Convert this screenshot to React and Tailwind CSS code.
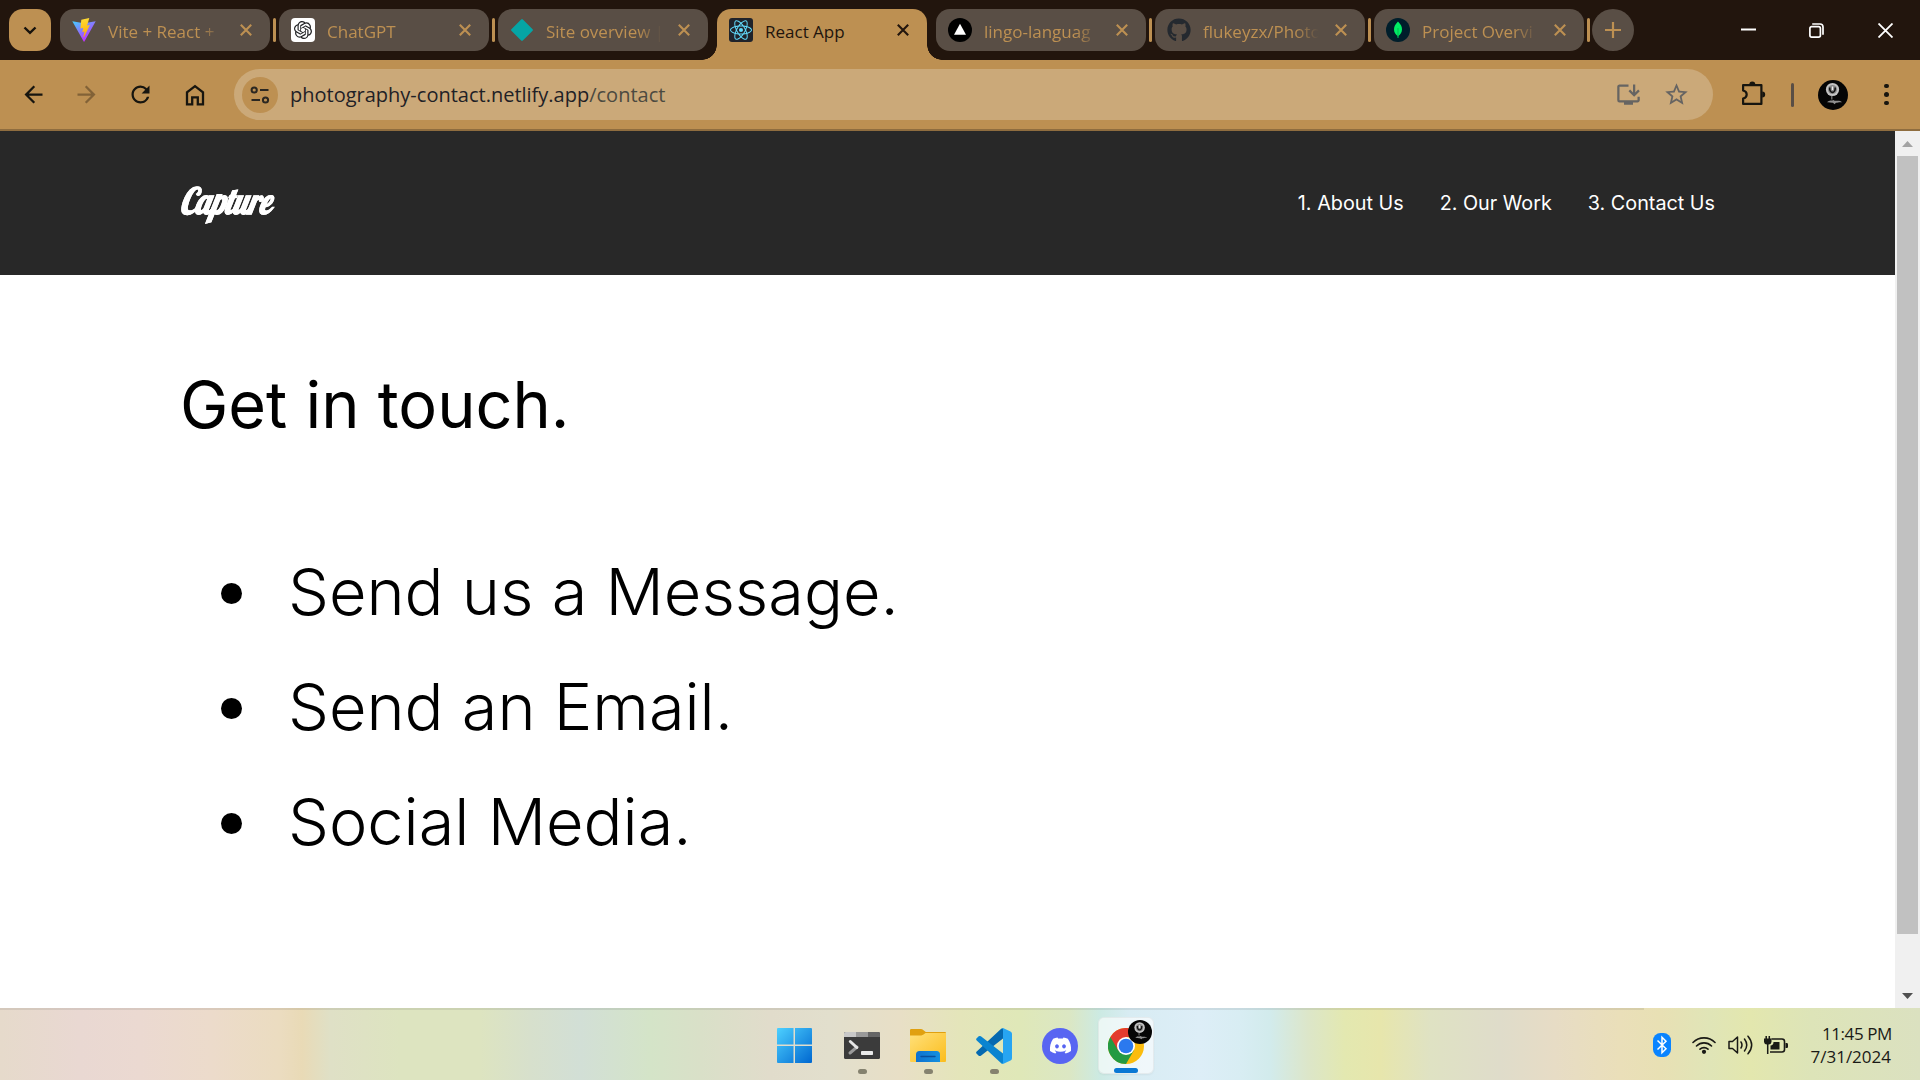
import { MdArrowBack, MdArrowForward, MdRefresh, MdInstallDesktop, MdStarOutline } from "react-icons/md";
import { FaGithub, FaDiscord } from "react-icons/fa";
import { SiOpenai, SiReact } from "react-icons/si";

function ViteIcon() {
  return (
    <svg viewBox="0 0 24 24" className="size-6">
      <defs>
        <linearGradient id="viteBody" x1="0" y1="0" x2="0.6" y2="0.9">
          <stop offset="0" stopColor="#41d1ff" />
          <stop offset="1" stopColor="#bd34fe" />
        </linearGradient>
        <linearGradient id="viteBolt" x1="0.4" y1="0" x2="0.5" y2="1">
          <stop offset="0" stopColor="#ffdd35" />
          <stop offset="1" stopColor="#ffa800" />
        </linearGradient>
      </defs>
      <path d="M.3 3.2 12 5.2l11.7-2L12.4 23.5a.4.4 0 0 1-.7 0Z" fill="url(#viteBody)" />
      <path d="m17.3.1-8 1.6-.9 8.9 2.8-.6-.9 4.1 2.3-.7-1.2 5.3c0 .4.3.6.6.2L17.900 7l-2.900.6 1-3.200Z" fill="url(#viteBolt)" />
    </svg>
  );
}

function ChatGptIcon() {
  return (
    <span className="flex size-6 items-center justify-center rounded-[4px] bg-white">
      <SiOpenai className="size-[18px] text-[#202123]" />
    </span>
  );
}

function NetlifyIcon() {
  return (
    <svg viewBox="0 0 24 24" className="size-6">
      <rect x="3.9" y="3.9" width="16.200" height="16.200" rx="1.200" transform="rotate(45 12 12)" fill="#05a5a5" />
    </svg>
  );
}

function ReactIcon() {
  return (
    <span className="flex size-6 items-center justify-center rounded-[3px] bg-[#20232a]">
      <SiReact className="size-[22px] text-[#61dafb]" />
    </span>
  );
}

function VercelIcon() {
  return (
    <svg viewBox="0 0 24 24" className="size-6">
      <circle cx="12" cy="12" r="12" fill="#000" />
      <path d="m12 5.800 6 11H6Z" fill="#fff" />
    </svg>
  );
}

function MongoIcon() {
  return (
    <svg viewBox="0 0 24 24" className="size-6">
      <circle cx="12" cy="12" r="12" fill="#001e2b" />
      <path d="M12 3.500c3 3 4 5.300 4 8 0 3-1.600 5-3.600 6.500V20h-.8v-2C9.600 16.500 8 14.500 8 11.500c0-2.700 1-5 4-8Z" fill="#00ed64" />
      <path d="M12 10v9" stroke="#00a34a" strokeWidth=".7" />
    </svg>
  );
}

function Cross({ className }) {
  return (
    <svg viewBox="0 0 12 12" className={className} fill="none" stroke="currentColor" strokeWidth="2.100">
      <path d="m.8.8 10.400 10.400M11.200.8.8 11.200" />
    </svg>
  );
}

const tabs = [
  { title: "Vite + React +", icon: <ViteIcon />, divider: true },
  { title: "ChatGPT", icon: <ChatGptIcon />, divider: true },
  { title: "Site overview |", icon: <NetlifyIcon /> },
  { title: "React App", icon: <ReactIcon />, active: true },
  { title: "lingo-languag", icon: <VercelIcon />, divider: true },
  { title: "flukeyzx/Photo", icon: <FaGithub className="size-6 text-[#24292f]" />, divider: true },
  { title: "Project Overvi", icon: <MongoIcon />, divider: true },
];

function Tab({ tab }) {
  if (tab.active) {
    return (
      <div className="relative flex h-[51px] w-[210px] shrink-0 items-start rounded-t-[14px] bg-[#bd9052] pl-3 text-[#22150d]">
        <span className="absolute bottom-0 -left-[15px] size-[15px] bg-[radial-gradient(circle_at_0_0,transparent_14.500px,#bd9052_15px)]" />
        <span className="absolute -right-[15px] bottom-0 size-[15px] bg-[radial-gradient(circle_at_100%_0,transparent_14.500px,#bd9052_15px)]" />
        <div className="flex h-[42px] items-center">
          {tab.icon}
          <span className="ml-3 w-[116px] pt-[3px] whitespace-nowrap">{tab.title}</span>
          <Cross className="ml-4 size-3" />
        </div>
      </div>
    );
  }
  return (
    <div className="flex h-[42px] w-[210px] shrink-0 items-center rounded-[14px] bg-[#594e45] pl-3 text-[#bd9052]">
      {tab.icon}
      <span className="ml-3 w-[122px] mask-r-from-75% mask-r-to-95% pt-[3px] whitespace-nowrap">{tab.title}</span>
      <Cross className="ml-2.5 size-3" />
    </div>
  );
}

function TabStrip() {
  return (
    <div className="flex h-[60px] items-start bg-[#22150d] pt-[9px] pl-[9px] text-[17px]">
      <button className="mr-[9px] flex size-[42px] items-center justify-center rounded-[14px] bg-[#bd9052]">
        <svg viewBox="0 0 14 9" className="h-[9px] w-3.5" fill="none" stroke="#17120c" strokeWidth="2.400">
          <path d="m1.500 1.500 5.500 5.300 5.500-5.300" />
        </svg>
      </button>
      {tabs.map((tab) => (
        <div key={tab.title} className="flex shrink-0 last-of-type:-mr-px">
          <Tab tab={tab} />
          <div className="flex h-[42px] w-[9px] items-center justify-center">
            {tab.divider && <span className="h-6 w-[3px] rounded-sm bg-[#bd9052]" />}
          </div>
        </div>
      ))}
      <button className="-ml-px flex size-[42px] items-center justify-center rounded-full bg-[#594e45]">
        <svg viewBox="0 0 16 16" className="size-4" stroke="#bd9052" strokeWidth="2.200">
          <path d="M8 0v16M0 8h16" />
        </svg>
      </button>
      <div className="ml-auto flex h-[42px] items-center pr-[27px] text-white">
        <svg viewBox="0 0 15 15" className="mr-[53px] size-[15px]" stroke="currentColor" strokeWidth="2">
          <path d="M0 6.500h15" />
        </svg>
        <svg viewBox="0 0 15 15" className="mr-[54px] size-[15px]" fill="none" stroke="currentColor" strokeWidth="1.700">
          <rect x=".9" y="3.600" width="10.500" height="10.500" rx="1.800" />
          <path d="M3.200 1h7.800a3 3 0 0 1 3 3v7.800" />
        </svg>
        <svg viewBox="0 0 15 15" className="size-[15px]" stroke="currentColor" strokeWidth="1.800">
          <path d="m.5.5 14 14m0-14-14 14" />
        </svg>
      </div>
    </div>
  );
}

function Avatar({ className }) {
  return (
    <svg viewBox="0 0 30 30" className={className}>
      <circle cx="15" cy="15" r="15" fill="#050505" />
      <circle cx="14.500" cy="9.500" r="6.600" fill="#c4c4c4" />
      <circle cx="14.500" cy="9.500" r="4.600" fill="#8a8a8a" />
      <path d="M11.700 7.500c-.5 6.500 6 6.500 5.500 0" fill="none" stroke="#111" strokeWidth="1.600" />
      <path d="M14.500 6.500v3.500" stroke="#eee" strokeWidth="1.200" />
      <path d="M13.800 16v3.500" stroke="#777" strokeWidth="1.300" />
      <path d="M9 22.300c2.500-2.800 5-1 6.500-2.300 2 2 6-.5 8.500 2.300-3-.5-4 .5-6 .5l-1.500 1.400-1.500-1.400c-2 .3-4-.8-6-.5Z" fill="#8f8f8f" />
    </svg>
  );
}

function Toolbar() {
  return (
    <div className="flex h-[71px] items-center border-b-2 border-[#8f6d3f] bg-[#bd9052] text-[#17150f]">
      <MdArrowBack className="ml-[20px] size-[27px]" />
      <MdArrowForward className="ml-[26px] size-[27px] text-[#826237]" />
      <MdRefresh className="ml-[27px] size-[27px]" />
      <svg viewBox="0 0 20 22" className="ml-[31px] h-[22px] w-5" fill="none" stroke="currentColor" strokeWidth="2.300">
        <path d="M2 20.300V8.400l8-6.200 8 6.200v11.900h-5.200v-7H7.200v7Z" />
      </svg>
      <div className="ml-[29px] flex h-[51px] w-[1479px] items-center rounded-full bg-[#cba979] pl-2">
        <span className="flex size-9 items-center justify-center rounded-full bg-[#bd9052]">
          <svg viewBox="0 0 20 18" className="h-[18px] w-5" fill="none" stroke="#2b2721" strokeWidth="2">
            <circle cx="4.200" cy="4" r="2.600" />
            <path d="M10 4h8.500M1.500 14H10" />
            <circle cx="15.500" cy="14" r="2.600" />
          </svg>
        </span>
        <span className="ml-3 text-[20px] text-[#1f2126]">
          photography-contact.netlify.app<span className="text-[#4c4a40]">/contact</span>
        </span>
        <MdInstallDesktop className="ml-auto size-[27px] text-[#666462]" />
        <MdStarOutline className="mr-[23px] ml-[21px] size-[27px] text-[#666462]" />
      </div>
      <svg viewBox="0 0 26 26" className="ml-[28px] size-[26px] -translate-y-0.5" fill="none" stroke="currentColor" strokeWidth="2.200" strokeLinejoin="round">
        <path d="M2.100 5.100h18.300v18.800H2.100v-5.400c4.800-1 4.800-7 0-8Z" />
        <path d="M8.300 4.400a3 3 0 0 1 6 0ZM21.200 11.500a3 3 0 0 1 0 6Z" fill="currentColor" stroke="none" />
      </svg>
      <span className="ml-6 h-6 w-[3px] rounded-sm bg-[#594e45]" />
      <Avatar className="ml-6 size-[30px]" />
      <span className="ml-[36px] flex flex-col gap-1">
        <span className="size-[4.500px] rounded-full bg-current" />
        <span className="size-[4.500px] rounded-full bg-current" />
        <span className="size-[4.500px] rounded-full bg-current" />
      </span>
    </div>
  );
}

function Page() {
  return (
    <main className="flex-1 bg-white font-[Inter,sans-serif] text-black">
      <header className="flex h-36 items-center justify-between bg-[#282828] px-[180px] text-white">
        <div className="w-[100px] origin-left scale-x-[0.850] pb-1 font-[Lobster,'Liberation_Serif',serif] text-[36px] leading-[42px] font-bold tracking-[-0.3px] italic [-webkit-text-stroke:0.400px_white]">
          Capture
        </div>
        <nav className="flex gap-[36px] pt-0.5 text-[19.800px]">
          <a>1. About Us</a>
          <a>2. Our Work</a>
          <a>3. Contact Us</a>
        </nav>
      </header>
      <h2 className="mt-[91px] ml-[180px] text-[64.800px] leading-[78px]">Get in touch.</h2>
      <ul className="mt-[90px] ml-[221px] text-[64.800px] leading-[115px] font-light">
        {["Send us a Message.", "Send an Email.", "Social Media."].map((item) => (
          <li key={item} className="flex items-center">
            <span className="mt-[3px] mr-[46px] size-[21px] rounded-full bg-black" />
            {item}
          </li>
        ))}
      </ul>
    </main>
  );
}

function Scrollbar() {
  return (
    <div className="flex w-[25px] flex-col items-center bg-[#f0f0f0]">
      <svg viewBox="0 0 11 6" className="mt-[10px] h-[6px] w-[11px]">
        <path d="M5.500 0 11 6H0Z" fill="#a3a3a3" />
      </svg>
      <div className="mt-[9px] h-[778px] w-[21px] bg-[#c1c1c1]" />
      <svg viewBox="0 0 11 6" className="mt-auto mb-[9px] h-[6px] w-[11px]">
        <path d="M5.500 6 11 0H0Z" fill="#505050" />
      </svg>
    </div>
  );
}

function WindowsIcon() {
  return (
    <svg viewBox="0 0 35 35" className="size-[35px]">
      <defs>
        <linearGradient id="winFill" gradientUnits="userSpaceOnUse" x1="0" y1="0" x2="35" y2="35">
          <stop offset="0" stopColor="#4dd0ff" />
          <stop offset="1" stopColor="#0067d0" />
        </linearGradient>
      </defs>
      <path d="M1 0h15.500v16.500H0V1a1 1 0 0 1 1-1ZM18 0h16a1 1 0 0 1 1 1v15.500H18ZM0 18h16.500v17H1a1 1 0 0 1-1-1ZM18 18h17v16a1 1 0 0 1-1 1H18Z" fill="url(#winFill)" />
    </svg>
  );
}

function TerminalIcon() {
  return (
    <svg viewBox="0 0 36 27" className="h-[27px] w-9">
      <rect width="36" height="27" rx="1.500" fill="#3b3b3b" />
      <path d="M1.500 0H12v5H0V1.500A1.500 1.500 0 0 1 1.500 0Z" fill="#c8c8c8" />
      <path d="M12 0h12v5H12Z" fill="#999" />
      <path d="M24 0h10.500A1.500 1.500 0 0 1 36 1.500V5H24Z" fill="#666" />
      <path d="m6 21 7-6" stroke="#9a9a9a" strokeWidth="3" strokeLinecap="round" />
      <path d="m6.300 9.500 6.500 6" stroke="#e6e6e6" strokeWidth="3" strokeLinecap="round" />
      <rect x="17" y="19" width="12" height="4" rx=".8" fill="#eaeaea" />
    </svg>
  );
}

function FolderIcon() {
  return (
    <svg viewBox="0 0 36 33" className="h-[33px] w-9">
      <defs>
        <linearGradient id="folderFill" x1="0" y1="0" x2="1" y2="1">
          <stop offset="0" stopColor="#ffe07a" />
          <stop offset="1" stopColor="#fbbd1d" />
        </linearGradient>
        <linearGradient id="folderClip" x1="0" y1="0" x2="1" y2="0">
          <stop offset="0" stopColor="#0f72cf" />
          <stop offset="1" stopColor="#1490df" />
        </linearGradient>
      </defs>
      <path d="M1.200 0h9.600c1 0 1.700.4 2.400 1l2.600 2H35a1 1 0 0 1 1 1v4H0V1.200A1.200 1.200 0 0 1 1.200 0Z" fill="#e0a010" />
      <path d="M0 6.500h10c2 0 3.200-.7 4.500-1.800L15.500 4H36v28a1 1 0 0 1-1 1H1a1 1 0 0 1-1-1Z" fill="url(#folderFill)" />
      <path d="M6 33v-7.500a3.500 3.500 0 0 1 3.500-3.500h17a3.500 3.500 0 0 1 3.500 3.500V33Z" fill="url(#folderClip)" />
      <path d="M11 27.500h14" stroke="#0a4f9c" strokeWidth="1.400" strokeLinecap="round" />
    </svg>
  );
}

function VsCodeIcon() {
  return (
    <svg viewBox="0 0 36 36" className="size-9">
      <path d="M.7 23.600a1.500 1.500 0 0 0 0 2.200l2 1.900a1.800 1.800 0 0 0 2.200 0L27 10.500V.2a2.200 2.200 0 0 0-1.800.5Z" fill="#0569b0" />
      <path d="M.7 12.400a1.500 1.500 0 0 1 0-2.200l2-1.900a1.800 1.800 0 0 1 2.200 0L27 25.500V35.800a2 2 0 0 1-1.800-.5Z" fill="#0a84d0" />
      <path d="M25.200.8C26 0 27 0 27.500.2l7 3.300A2.600 2.600 0 0 1 36 5.800v24.400a2.600 2.600 0 0 1-1.500 2.300l-7 3.300c-.7.3-1.600 0-2.300-.6.8.6 1.800.1 1.800-1V1.800c0-1.100-1-1.700-1.800-1Z" fill="#27a5f2" />
    </svg>
  );
}

function ChromeIcon() {
  return (
    <svg viewBox="0 0 36 36" className="size-9">
      <circle cx="18" cy="18" r="18" fill="#fbbc0e" />
      <path d="M2.400 9A18 18 0 0 0 18 36l7.800-13.500L18 18Z" fill="#249a42" />
      <path d="M2.400 9A18 18 0 0 1 33.600 9H18v9l-7.800 4.500Z" fill="#e33b2e" />
      <circle cx="18" cy="18" r="9" fill="#fff" />
      <circle cx="18" cy="18" r="7.300" fill="#2b79ee" />
    </svg>
  );
}

function TaskbarApp({ children, running }) {
  return (
    <div className="relative flex h-[57px] w-[66px] items-center justify-center">
      {children}
      {running && <span className="absolute bottom-0 h-[5px] w-[9px] rounded-full bg-[#85826f]" />}
    </div>
  );
}

function Taskbar() {
  return (
    <footer className="flex h-[72px] flex-col bg-[linear-gradient(90deg,#e6dacb_0px,#e9d8d2_80px,#ebd9d1_140px,#ecdbcb_210px,#ebdcc0_280px,#e9dab6_302px,#dfe0c6_330px,#dde4c0_400px,#dde4c0_480px,#d7e0cc_530px,#d2dfd6_580px,#d4e4c8_650px,#d9e0c8_700px,#e1dccb_770px,#e2dfcd_830px,#e8dfc6_900px,#e4e5ba_960px,#dfe8b8_1020px,#dbe7c4_1070px,#cceae3_1100px,#d8ecf3_1130px,#ddeef7_1200px,#d8edf3_1240px,#d2ebec_1270px,#dce6c9_1308px,#e3e8b0_1345px,#e7e6ac_1380px,#dfe2c3_1430px,#dfdcca_1500px,#e7dcc5_1555px,#eadfb9_1620px,#e8e0b4_1660px,#e0e5b7_1710px,#e3e7ae_1750px,#dde4b8_1810px,#dbe1c0_1920px)]">
      <div className="h-0.5 w-[1644px] bg-black/8" />
      <div className="flex h-[70px] items-start pt-[7px]">
        <div className="ml-[761px] flex">
          <div className="mr-0.5 flex">
            <TaskbarApp><WindowsIcon /></TaskbarApp>
          </div>
          <TaskbarApp running><TerminalIcon /></TaskbarApp>
          <TaskbarApp running><FolderIcon /></TaskbarApp>
          <TaskbarApp running><VsCodeIcon /></TaskbarApp>
          <TaskbarApp>
            <span className="flex size-9 items-center justify-center rounded-full bg-[#5865f2]">
              <FaDiscord className="size-[23px] text-white" />
            </span>
          </TaskbarApp>
          <TaskbarApp>
            <div className="relative flex h-[57px] w-14 items-center justify-center rounded-md border border-black/5 bg-white/60 shadow-xs">
              <ChromeIcon />
              <Avatar className="absolute top-0.5 right-px size-6" />
              <span className="absolute bottom-0 h-[5px] w-6 rounded-full bg-[#0a78d4]" />
            </div>
          </TaskbarApp>
        </div>
        <div className="ml-auto flex h-[55px] items-center pr-[29px] text-[#1a1a16]">
          <svg viewBox="0 0 18 24" className="h-6 w-[18px]">
            <rect width="18" height="24" rx="7.500" fill="#0a84ff" />
            <path d="m4.500 7.500 8.500 8.300-4 4V4.200l4 4-8.500 8.300" fill="none" stroke="#fff" strokeWidth="1.500" />
          </svg>
          <svg viewBox="0 0 24 18" className="ml-[21px] h-[18px] w-6" fill="none" stroke="currentColor" strokeWidth="1.600" strokeLinecap="round">
            <path d="M1 6.500a15.500 15.500 0 0 1 22 0M4.500 10a10.600 10.600 0 0 1 15 0M8 13.200a5.800 5.800 0 0 1 8 0" />
            <circle cx="12" cy="15.800" r="1.300" fill="currentColor" />
          </svg>
          <svg viewBox="0 0 25 20" className="ml-3 h-5 w-[25px]" fill="none" stroke="currentColor" strokeWidth="1.500" strokeLinecap="round" strokeLinejoin="round">
            <path d="M1 6.500h3.500L9.500 2v16l-5-4.500H1Z" />
            <path d="M13 7c1.300 2 1.300 4 0 6M16.500 4c3 4 3 8 0 12M20 1.200c5 6 5 11.600 0 17.600" />
          </svg>
          <svg viewBox="0 0 24 18" className="ml-[11px] h-[18px] w-6" fill="none" stroke="currentColor" strokeWidth="1.600">
            <path d="M7.500 3H18a2.500 2.500 0 0 1 2.500 2.500v8A2.500 2.500 0 0 1 18 16H6" />
            <path d="M0 2.500h7.500V6a3 3 0 0 1-3 2.500H3A3 3 0 0 1 0 6Z" fill="currentColor" stroke="none" />
            <path d="M2.200 0v3M5.300 0v3M3.700 8v10" strokeWidth="1.500" />
            <path d="M9.500 6h6v7.500h-9V9.500c2 0 3-1.500 3-3.500Z" fill="currentColor" stroke="none" />
            <path d="M21.500 7h1.200c.7 0 1.300.7 1.300 1.300v2.400c0 .7-.6 1.300-1.300 1.300h-1.200Z" fill="currentColor" stroke="none" />
          </svg>
          <div className="ml-[22px] flex w-[81px] flex-col items-end text-[17px] leading-[23px]">
            <span className="-mr-px tracking-[-0.4px]">11:45 PM</span>
            <span>7/31/2024</span>
          </div>
        </div>
      </div>
    </footer>
  );
}

export default function App() {
  return (
    <div className="flex h-[1080px] w-[1920px] flex-col overflow-hidden font-['Segoe_UI','Open_Sans',sans-serif]">
      <TabStrip />
      <Toolbar />
      <div className="flex h-[877px]">
        <Page />
        <Scrollbar />
      </div>
      <Taskbar />
    </div>
  );
}
